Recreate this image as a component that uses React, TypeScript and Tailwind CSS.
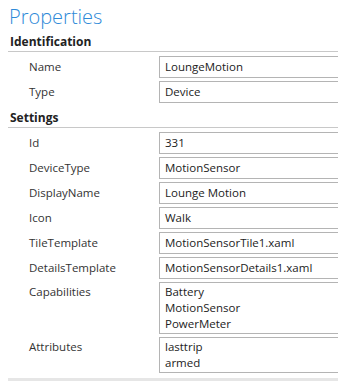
import React from 'react';

type Prop = { label: string; value: string[] };

const identification: Prop[] = [
  { label: 'Name', value: ['LoungeMotion'] },
  { label: 'Type', value: ['Device'] },
];

const settings: Prop[] = [
  { label: 'Id', value: ['331'] },
  { label: 'DeviceType', value: ['MotionSensor'] },
  { label: 'DisplayName', value: ['Lounge Motion'] },
  { label: 'Icon', value: ['Walk'] },
  { label: 'TileTemplate', value: ['MotionSensorTile1.xaml'] },
  { label: 'DetailsTemplate', value: ['MotionSensorDetails1.xaml'] },
  { label: 'Capabilities', value: ['Battery', 'MotionSensor', 'PowerMeter'] },
  { label: 'Attributes', value: ['lasttrip', 'armed'] },
];

const PropRow = ({ label, value }: Prop) => {
  const multi = value.length > 1;
  return (
    <div className={`flex ${multi ? 'items-start' : 'items-center'}`}>
      <div className={`w-[151px] shrink-0 pl-[21px] text-[11.5px] leading-[16px] text-[#333] ${multi ? 'pt-[2px]' : ''}`}>
        {label}
      </div>
      {multi ? (
        <div className="w-[200px] shrink-0 border border-[#b4b4b4] bg-white px-[5px] py-[1px] text-[11.5px] leading-[16px] text-[#222]">
          {value.map((v) => (
            <div key={v}>{v}</div>
          ))}
        </div>
      ) : (
        <div className="flex h-[22px] w-[200px] shrink-0 items-center border border-[#b4b4b4] bg-white px-[5px] text-[11.5px] text-[#222]">
          {value[0]}
        </div>
      )}
    </div>
  );
};

const Section = ({ title, items, headerH }: { title: string; items: Prop[]; headerH: string }) => (
  <div>
    <div className={`flex ${headerH} items-end border-b border-[#c8c8c8] pl-[2px] pb-[1px] text-[12px] font-bold leading-[16px] text-[#222]`}>
      {title}
    </div>
    <div className="mt-[4px] flex flex-col gap-[3px]">
      {items.map((p) => (
        <PropRow key={p.label} {...p} />
      ))}
    </div>
  </div>
);

export default function App() {
  return (
    <div
      className="h-[385px] w-[338px] overflow-hidden bg-white pl-[8px]"
      style={{ fontFamily: '"Segoe UI", "Open Sans", "Noto Sans", sans-serif' }}
    >
      <div className="flex h-[35px] items-start pl-[1px] text-[20px] font-light leading-[34px] text-[#2e8ad8]">
        Properties
      </div>
      <Section title="Identification" items={identification} headerH="h-[17px]" />
      <Section title="Settings" items={settings} headerH="h-[25px]" />
      <div className="mt-[5px] h-[3px] w-[340px] bg-[#e6e6e6]" />
    </div>
  );
}
